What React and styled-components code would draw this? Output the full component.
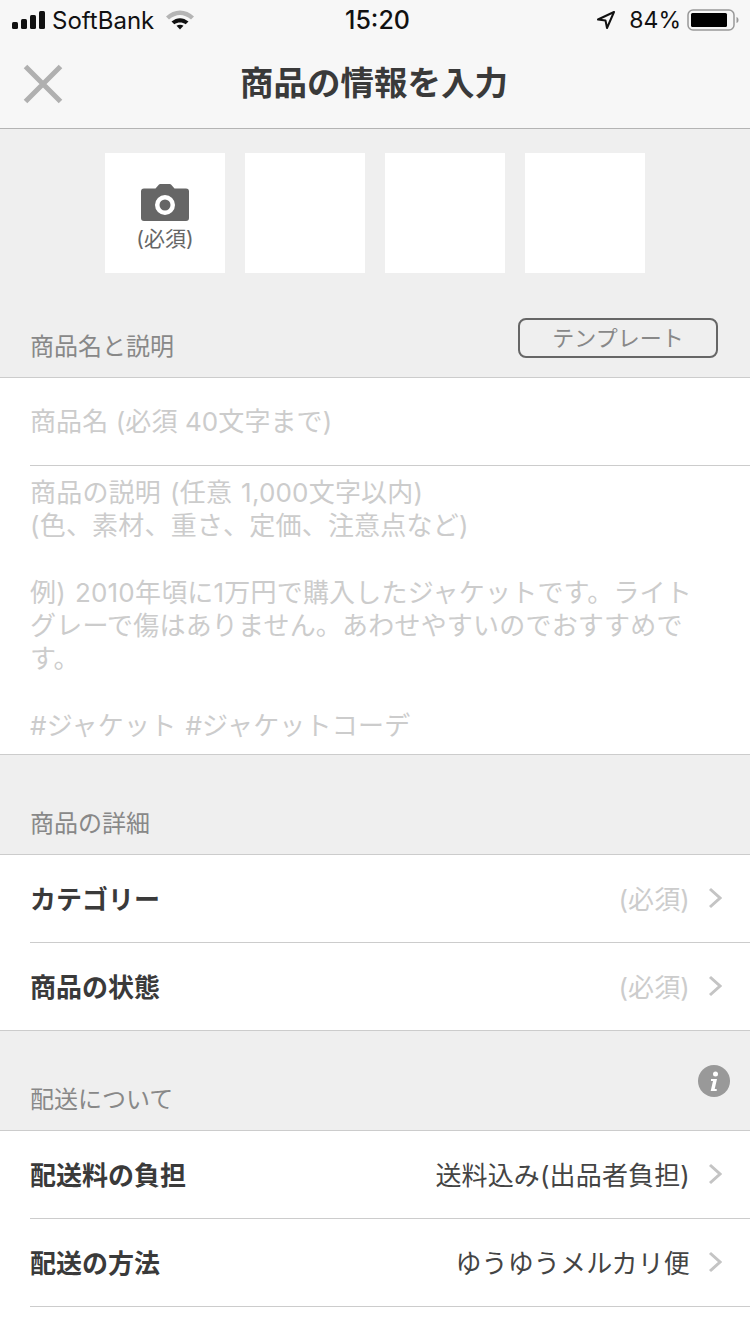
import React from 'react';
import styled, { createGlobalStyle } from 'styled-components';

const FONT = 'Inter, "Noto Sans CJK JP", sans-serif';

const GlobalStyle = createGlobalStyle`
  html, body {
    margin: 0;
    padding: 0;
    background: #fff;
  }
  body {
    font-family: ${FONT};
  }
`;

const Page = styled.div`
  width: 750px;
  height: 1334px;
  overflow: hidden;
  background: #fff;
`;

const StatusBar = styled.div`
  height: 40px;
  background: #f7f7f7;
  display: grid;
  grid-template-columns: 1fr auto 1fr;
  align-items: center;
  padding: 0 11px 0 12px;
  box-sizing: border-box;
  color: #111;
  font-family: Inter, sans-serif;
  font-size: 24px;
`;

const StatusLeft = styled.div`
  display: flex;
  align-items: center;
  gap: 6px;
`;

const StatusRight = styled.div`
  display: flex;
  align-items: center;
  justify-content: flex-end;
  gap: 8px;
`;

const Carrier = styled.span`
  margin-right: 6px;
`;

const Time = styled.span`
  margin-left: 4px;
  font-size: 25px;
  font-weight: 500;
`;

const Percent = styled.span`
  font-size: 23px;
  margin: 0 -2px 0 5px;
`;

const NavBar = styled.div`
  height: 88px;
  background: #f7f7f7;
  border-bottom: 1px solid #b4b4b4;
  display: flex;
  align-items: center;
  justify-content: center;
  position: relative;
`;

const Close = styled.svg`
  position: absolute;
  left: 23px;
  top: 24px;
`;

const NavTitle = styled.h1`
  margin: 0 2px 6px 0;
  font-family: "Noto Sans CJK JP", sans-serif;
  font-size: 33.5px;
  font-weight: 700;
  color: #3a3a3a;
  line-height: 82px;
`;

const PhotoArea = styled.div`
  background: #efefef;
  display: flex;
  justify-content: center;
  gap: 20px;
  padding-top: 24px;
`;

const PhotoTile = styled.div`
  width: 120px;
  height: 120px;
  background: #fff;
  box-sizing: border-box;
  padding-top: 31px;
  display: flex;
  flex-direction: column;
  align-items: center;
  gap: 5px;
  color: #666;
  font-family: ${FONT};
  font-size: 21px;
  line-height: 26px;
`;

const SectionHead = styled.div`
  background: #efefef;
  height: ${p => p.$height}px;
  border-bottom: 1px solid #ccc;
  box-sizing: border-box;
  padding: 0 32px 0 30px;
  display: flex;
  align-items: flex-end;
  justify-content: space-between;
  position: relative;
`;

const SectionLabel = styled.span`
  font-family: ${FONT};
  font-size: 24px;
  line-height: 34px;
  color: #888;
  padding-bottom: 13px;
`;

const TemplateButton = styled.button`
  width: 200px;
  height: 40px;
  margin-bottom: 19px;
  padding: 0 0 5px;
  background: transparent;
  border: 2px solid #666;
  border-radius: 8px;
  color: #888;
  font-family: "Noto Sans CJK JP", sans-serif;
  font-size: 22px;
  line-height: 30px;
`;

const InfoIcon = styled.svg`
  position: absolute;
  right: 20px;
  top: 34px;
`;

const NameField = styled.div`
  height: 88px;
  margin-left: 30px;
  border-bottom: 1px solid #ccc;
  box-sizing: border-box;
  padding-bottom: 5px;
  display: flex;
  align-items: center;
  font-family: ${FONT};
  font-size: 26px;
  letter-spacing: 0.1px;
  color: #ccc;
`;

const DescField = styled.div`
  height: 289px;
  box-sizing: border-box;
  padding: 10px 40px 0 30px;
  border-bottom: 1px solid #ccc;
  font-family: ${FONT};
  font-size: 26px;
  line-height: 33.3px;
  letter-spacing: 0.2px;
  word-spacing: 1.5px;
  color: #ccc;
  white-space: pre-line;
`;

const RowWrap = styled.div`
  padding-left: 30px;
  background: #fff;
`;

const RowInner = styled.div`
  height: 88px;
  box-sizing: border-box;
  padding: 0 28px 2px 0;
  border-bottom: 1px solid #ccc;
  display: flex;
  align-items: center;
  justify-content: space-between;
  font-family: ${FONT};
  font-size: 26px;
  ${p => p.$last && 'margin-left: -30px; padding-left: 30px;'}
`;

const RowTitle = styled.span`
  font-weight: 700;
  color: #3a3a3a;
`;

const RowRight = styled.span`
  display: flex;
  align-items: center;
  gap: 18px;
  letter-spacing: 0.15px;
  color: ${p => (p.$required ? '#ccc' : '#444')};
`;

const Chevron = () => (
  <svg width="14" height="22" viewBox="0 0 14 22">
    <path d="M2 2l10 9-10 9" fill="none" stroke="#c4c4c4" strokeWidth="3" />
  </svg>
);

const Row = ({ title, value, required, last }) => (
  <RowWrap>
    <RowInner $last={last}>
      <RowTitle>{title}</RowTitle>
      <RowRight $required={required}>
        {value}
        <Chevron />
      </RowRight>
    </RowInner>
  </RowWrap>
);

const Signal = () => (
  <svg width="34" height="20" viewBox="0 0 34 20">
    <rect x="0" y="12" width="6" height="7" rx="1.5" fill="#111" />
    <rect x="9" y="9" width="6" height="10" rx="1.5" fill="#111" />
    <rect x="18" y="5" width="6" height="14" rx="1.5" fill="#111" />
    <rect x="27" y="1" width="6" height="18" rx="1.5" fill="#111" />
  </svg>
);

const Wifi = () => (
  <svg width="28" height="20" viewBox="0 0 28 20">
    <path d="M0 6.500C8 -1.500 20 -1.500 28 6.500l-3 3C18 3.500 10 3.500 3 9.500z" fill="#b5b5b5" />
    <path d="M5.500 11.500c5.500-4.500 11.500-4.500 17 0l-2.800 2.800c-3.400-2.500-8-2.500-11.400 0z" fill="#111" />
    <path d="M10.500 15.800c2-1.500 5-1.500 7 0L14 19.500z" fill="#111" />
  </svg>
);

const Location = () => (
  <svg width="20" height="20" viewBox="0 0 20 20">
    <path d="M18 2L2 9.500l7.500 1 1.500 7.500z" fill="none" stroke="#111" strokeWidth="2" strokeLinejoin="round" />
  </svg>
);

const Battery = () => (
  <svg width="52" height="24" viewBox="0 0 52 24">
    <rect x="1" y="2" width="46" height="20" rx="5" fill="none" stroke="#999" strokeWidth="1.500" />
    <rect x="4" y="5" width="36" height="14" rx="1.500" fill="#000" />
    <path d="M49.500 9c1.500.5 2 1.500 2 3s-.5 2.500-2 3z" fill="#999" />
  </svg>
);

const Camera = () => (
  <svg width="48" height="37" viewBox="0 0 48 37">
    <path
      fillRule="evenodd"
      d="M14.500 4.500L18 .5c.3-.3.7-.5 1.200-.5h9.600c.5 0 .9.200 1.200.5l3.500 4H45a3 3 0 0 1 3 3V34a3 3 0 0 1-3 3H3a3 3 0 0 1-3-3V7.500a3 3 0 0 1 3-3zM24 11a10 10 0 1 0 0 20 10 10 0 0 0 0-20z"
      fill="#666"
    />
    <circle cx="24" cy="21" r="5.500" fill="#666" />
  </svg>
);

const App = () => (
  <Page>
    <GlobalStyle />
    <StatusBar>
      <StatusLeft>
        <Signal />
        <Carrier>SoftBank</Carrier>
        <Wifi />
      </StatusLeft>
      <Time>15:20</Time>
      <StatusRight>
        <Location />
        <Percent>84%</Percent>
        <Battery />
      </StatusRight>
    </StatusBar>
    <NavBar>
      <Close width="40" height="40" viewBox="0 0 40 40">
        <path d="M2.500 2.500l35 35M37.500 2.500l-35 35" stroke="#b0b0b0" strokeWidth="5" fill="none" />
      </Close>
      <NavTitle>商品の情報を入力</NavTitle>
    </NavBar>
    <PhotoArea>
      <PhotoTile>
        <Camera />
        <span>(必須)</span>
      </PhotoTile>
      <PhotoTile />
      <PhotoTile />
      <PhotoTile />
    </PhotoArea>
    <SectionHead $height={105}>
      <SectionLabel>商品名と説明</SectionLabel>
      <TemplateButton>テンプレート</TemplateButton>
    </SectionHead>
    <NameField>商品名 (必須 40文字まで)</NameField>
    <DescField>
      {`商品の説明 (任意 1,000文字以内)
(色、素材、重さ、定価、注意点など)

例) 2010年頃に1万円で購入したジャケットです。ライト
グレーで傷はありません。あわせやすいのでおすすめで
す。

#ジャケット #ジャケットコーデ`}
    </DescField>
    <SectionHead $height={100}>
      <SectionLabel>商品の詳細</SectionLabel>
    </SectionHead>
    <Row title="カテゴリー" value="(必須)" required />
    <Row title="商品の状態" value="(必須)" required last />
    <SectionHead $height={100}>
      <SectionLabel>配送について</SectionLabel>
      <InfoIcon width="32" height="32" viewBox="0 0 32 32">
        <circle cx="16" cy="16" r="16" fill="#999" />
        <circle cx="17.500" cy="9" r="2.500" fill="#fff" />
        <path d="M13 14h6l-2.300 10h2v2h-6l2.300-10h-2z" fill="#fff" />
      </InfoIcon>
    </SectionHead>
    <Row title="配送料の負担" value="送料込み(出品者負担)" />
    <Row title="配送の方法" value="ゆうゆうメルカリ便" />
  </Page>
);

export default App;
